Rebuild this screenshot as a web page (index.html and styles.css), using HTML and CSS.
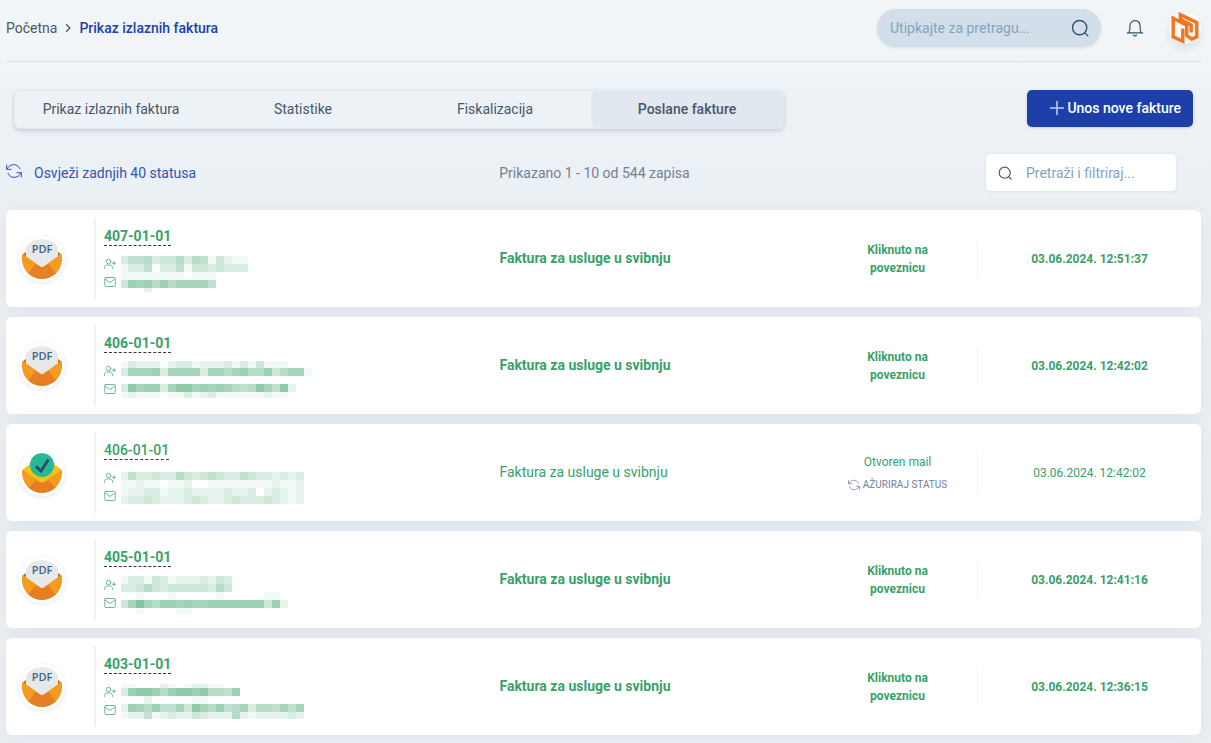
FILE: index.html
```html
<!DOCTYPE html>
<html lang="hr">
<head>
<meta charset="utf-8">
<meta name="viewport" content="width=device-width, initial-scale=1">
<title>Prikaz izlaznih faktura</title>
<link rel="stylesheet" href="styles.css">
</head>
<body>
<svg class="sprite" aria-hidden="true">
  <symbol id="i-search" viewBox="0 0 24 24"><circle cx="11.5" cy="11.5" r="9.5"/><path d="M18.5 18.5L22.500 22.500"/></symbol>
  <symbol id="i-refresh" viewBox="0 0 24 24"><path d="M1 3v6.500h6.500M1.500 9C4 4 8 2.500 12 2.500c4 0 7.500 2.300 9 6M23 21v-6.500h-6.500M22.500 15c-2.500 5-6.500 6.500-10.500 6.500-4 0-7.500-2.300-9-6"/></symbol>
  <symbol id="i-user" viewBox="0 0 24 24"><circle cx="9" cy="7" r="4.500"/><path d="M1 21v-2c0-3 2.500-5 5-5h6c2.500 0 5 2 5 5v2M20 7v7M16.500 10.500h7"/></symbol>
  <symbol id="i-mail" viewBox="0 0 24 24"><rect x="1.500" y="3" width="21" height="18" rx="2"/><path d="M2 6l10 7 10-7"/></symbol>
  <symbol id="i-pdf" viewBox="0 0 40 40">
    <g clip-path="url(#disc)">
      <path fill="#c27b12" d="M0 16l5-4h30l5 4v6H0z"/>
      <path fill="#e7e8ea" d="M4 0h32v19L20 28.500 4 19z"/>
      <path fill="#f39c1f" d="M0 14.500L14 26 4 40H0zM40 14.500L26 26l10 14h4z"/>
      <path fill="#f39c1f" d="M0 14.500L18.500 27.500q1.500.8 3 0L40 14.500V40H0z"/>
      <path fill="#e67e25" d="M3 40v-1L13.500 25l5 3q1.500.8 3 0l5-3L37 39v1z"/>
    </g>
  </symbol>
  <symbol id="i-opened" viewBox="0 0 40 40">
    <g clip-path="url(#disc)">
      <path fill="#f1c41b" d="M0 17L20 2l20 15v6L20 32 0 23z"/>
      <path fill="#f39c1f" d="M0 16.500L20 30l20-13.500V40H0z"/>
      <path fill="#e67e25" d="M3 40v-1L13.500 27.500 20 30l6.500-2.500L37 39v1z"/>
    </g>
    <circle cx="20" cy="12" r="12" fill="#26b999"/>
    <path d="M14 13.500l5 4.500 7.500-11.500" fill="none" stroke="#34495e" stroke-width="3"/>
  </symbol>
  <clipPath id="disc"><circle cx="20" cy="20" r="20"/></clipPath>
</svg>

<div class="page">
  <header class="top">
    <nav class="crumbs" aria-label="Putanja">
      <a href="#">Početna</a>
      <svg class="chevron" viewBox="0 0 8 8"><path d="M2.500 1l3 3-3 3"/></svg>
      <a href="#" class="current">Prikaz izlaznih faktura</a>
    </nav>
    <div class="tools">
      <label class="global-search">
        <input type="text" placeholder="Utipkajte za pretragu..." aria-label="Pretraga">
        <svg class="line"><use href="#i-search"/></svg>
      </label>
      <button class="bell" aria-label="Obavijesti">
        <svg class="line" viewBox="0 0 20 20"><path d="M1.500 15.500h17M3.500 15.500V14c1-1.200.8-3.500.8-6C4.300 4 6.800 1.800 10 1.800S15.700 4 15.700 8c0 2.500-.2 4.800.8 6v1.500M8.300 18c.8 1 2.600 1 3.400 0"/></svg>
      </button>
      <a href="#" class="brand" aria-label="Profil">
        <svg viewBox="0 0 28 32"><path d="M11.800 16.500V29.300L2.200 24.800V6.200L15.700 13.200V23.500L20.800 27.200 25.800 24.600V10.600L9.300 2.600V7.200L20.200 13.200V20.500"/></svg>
      </a>
    </div>
  </header>

  <div class="actions">
    <nav class="tabs" aria-label="Kartice">
      <a href="#">Prikaz izlaznih faktura</a>
      <a href="#">Statistike</a>
      <a href="#">Fiskalizacija</a>
      <a href="#" class="active">Poslane fakture</a>
    </nav>
    <button class="primary"><svg viewBox="0 0 14 14"><path d="M7 0v14M0 7h14"/></svg>Unos nove fakture</button>
  </div>

  <div class="filters">
    <a href="#" class="refresh"><svg class="line"><use href="#i-refresh"/></svg>Osvježi zadnjih 40 statusa</a>
    <p class="count">Prikazano 1 - 10 od 544 zapisa</p>
    <label class="filter-search">
      <svg class="line"><use href="#i-search"/></svg>
      <input type="text" placeholder="Pretraži i filtriraj..." aria-label="Pretraži i filtriraj">
    </label>
  </div>

  <main class="list">
    <article class="card bold">
      <div class="state"><svg viewBox="0 0 40 40"><use href="#i-pdf"/><text x="20" y="14" class="pdf-label">PDF</text></svg></div>
      <div class="info"><a href="#">407-01-01</a><div class="contact"><div class="glyphs"><svg class="line"><use href="#i-user"/></svg><svg class="line"><use href="#i-mail"/></svg></div><svg class="masked"></svg></div></div>
      <div class="subject">Faktura za usluge u svibnju</div>
      <div class="status"><span>Kliknuto na poveznicu</span></div>
      <time class="date">03.06.2024. 12:51:37</time>
    </article>
    <article class="card bold">
      <div class="state"><svg viewBox="0 0 40 40"><use href="#i-pdf"/><text x="20" y="14" class="pdf-label">PDF</text></svg></div>
      <div class="info"><a href="#">406-01-01</a><div class="contact"><div class="glyphs"><svg class="line"><use href="#i-user"/></svg><svg class="line"><use href="#i-mail"/></svg></div><svg class="masked"></svg></div></div>
      <div class="subject">Faktura za usluge u svibnju</div>
      <div class="status"><span>Kliknuto na poveznicu</span></div>
      <time class="date">03.06.2024. 12:42:02</time>
    </article>
    <article class="card">
      <div class="state"><svg viewBox="0 0 40 40"><use href="#i-opened"/></svg></div>
      <div class="info"><a href="#">406-01-01</a><div class="contact"><div class="glyphs"><svg class="line"><use href="#i-user"/></svg><svg class="line"><use href="#i-mail"/></svg></div><svg class="masked"></svg></div></div>
      <div class="subject">Faktura za usluge u svibnju</div>
      <div class="status"><span>Otvoren mail</span><button class="update"><svg class="line"><use href="#i-refresh"/></svg>AŽURIRAJ STATUS</button></div>
      <time class="date">03.06.2024. 12:42:02</time>
    </article>
    <article class="card bold">
      <div class="state"><svg viewBox="0 0 40 40"><use href="#i-pdf"/><text x="20" y="14" class="pdf-label">PDF</text></svg></div>
      <div class="info"><a href="#">405-01-01</a><div class="contact"><div class="glyphs"><svg class="line"><use href="#i-user"/></svg><svg class="line"><use href="#i-mail"/></svg></div><svg class="masked"></svg></div></div>
      <div class="subject">Faktura za usluge u svibnju</div>
      <div class="status"><span>Kliknuto na poveznicu</span></div>
      <time class="date">03.06.2024. 12:41:16</time>
    </article>
    <article class="card bold">
      <div class="state"><svg viewBox="0 0 40 40"><use href="#i-pdf"/><text x="20" y="14" class="pdf-label">PDF</text></svg></div>
      <div class="info"><a href="#">403-01-01</a><div class="contact"><div class="glyphs"><svg class="line"><use href="#i-user"/></svg><svg class="line"><use href="#i-mail"/></svg></div><svg class="masked"></svg></div></div>
      <div class="subject">Faktura za usluge u svibnju</div>
      <div class="status"><span>Kliknuto na poveznicu</span></div>
      <time class="date">03.06.2024. 12:36:15</time>
    </article>
  </main>
</div>
<script src="script.js"></script>
</body>
</html>
```

FILE: styles.css
```css
* { box-sizing: border-box; }
body {
  margin: 0;
  font: 14px/20px Roboto, "Noto Sans", sans-serif;
  color: #4a5568;
  background: linear-gradient(#f1f5f8 0, #f1f5f8 60px, #edf2f6 90px, #ebf0f4 200px, #ebf0f4 100%);
}
a { color: inherit; text-decoration: none; }
button, input { font: inherit; color: inherit; border: 0; background: none; padding: 0; margin: 0; outline: 0; }
button { cursor: pointer; }
input { min-width: 0; flex: 1; }
input::placeholder { color: #85a3bf; opacity: 1; }
p { margin: 0; }
svg { flex: none; }
.sprite { position: absolute; width: 0; height: 0; }
.line { fill: none; stroke: currentColor; stroke-width: 1.5; stroke-linecap: round; stroke-linejoin: round; }
.page { padding: 0 10px 8px 6px; }

.top { display: flex; justify-content: space-between; align-items: center; height: 62px; padding-bottom: 5px; border-bottom: 1px solid #dfe4ea; }
.crumbs { display: flex; align-items: center; gap: 6px; }
.crumbs .current { color: #1c3faa; font-weight: 500; }
.chevron { width: 10px; height: 10px; fill: none; stroke: #4a5568; stroke-width: 1; }
.tools { display: flex; align-items: center; }
.global-search { display: flex; align-items: center; width: 224px; height: 38px; padding: 0 12px 0 13px; border-radius: 19px; background: #d2dfea; box-shadow: 0 1px 3px rgba(0, 30, 60, .1); }
.global-search svg { width: 18px; height: 18px; stroke-width: 1.8; color: #2f556f; }
.bell { display: flex; margin: 0 25px; color: #2f556f; }
.bell svg { width: 18px; height: 20px; stroke-width: 1.3; }
.brand { display: flex; justify-content: center; width: 32px; height: 32px; border-radius: 50%; background: #f8fafb; box-shadow: 0 5px 8px rgba(0, 20, 40, .08); }
.brand svg { width: 28px; height: 32px; fill: none; stroke: #f47521; stroke-width: 3.4; }

.actions { display: flex; justify-content: space-between; align-items: flex-start; padding: 28px 8px 0; }
.tabs { display: grid; grid-template-columns: repeat(4, 1fr); width: 770px; border: 1px solid #e2e8f0; border-radius: 6px; background: #edf2f7; box-shadow: 0 2px 4px rgba(0, 20, 50, .16); }
.tabs a { padding: 8px 0 9px; text-align: center; border-radius: 6px; }
.tabs .active { background: #e2e8f0; font-weight: 500; }
.primary { display: flex; align-items: center; justify-content: flex-end; gap: 3px; width: 166px; height: 37px; padding: 0 12px 2px 0; border-radius: 5px; background: #1c3faa; color: #fff; font-weight: 500; box-shadow: 0 1px 3px rgba(0, 0, 0, .15); }
.primary svg { width: 14px; height: 14px; stroke: #c5cfea; stroke-width: 1.5; }

.filters { display: grid; grid-template-columns: 1fr 1fr 1fr; align-items: center; padding: 24px 24px 18px 0; }
.refresh { display: flex; gap: 12px; color: #3353b5; }
.refresh svg { width: 16px; height: 16px; }
.count { padding-left: 6px; text-align: center; color: #718096; }
.filter-search { display: flex; align-items: center; justify-self: end; gap: 14px; width: 192px; height: 39px; padding: 0 12px; border: 1px solid #e2e8f0; border-radius: 5px; background: #fff; box-shadow: 0 1px 2px rgba(0, 0, 0, .04); }
.filter-search svg { width: 14px; height: 14px; stroke-width: 2; }

.list { display: flex; flex-direction: column; gap: 10px; }
.card { display: grid; grid-template-columns: 88px 14fr 11fr 160px 223px; align-items: center; min-height: 97px; border-radius: 6px; background: #fff; color: #38a169; box-shadow: 0 3px 20px rgba(40, 70, 100, .07); }
.state { display: flex; align-items: center; align-self: stretch; margin: 8px 0; padding: 1px 0 0 16px; }
.state svg { width: 40px; height: 40px; border-radius: 50%; box-shadow: 0 0 0 3px #fff, 0 1px 4px 3px rgba(0, 0, 0, .1); }
.pdf-label { font: 600 11px "Open Sans", sans-serif; text-anchor: middle; fill: #3e6289; }
.info { align-self: stretch; margin: 8px 0; padding: 8px 0 0 8px; border-left: 2px solid #edf2f7; }
.info > a { display: inline-block; height: 20px; font-weight: 500; border-bottom: 1px dashed #2d3748; }
.contact { display: flex; gap: 5px; margin-top: 5px; }
.glyphs { display: flex; flex-direction: column; gap: 6px; padding-top: 7px; }
.glyphs svg { width: 12px; height: 12px; opacity: .8; stroke-width: 1.8; }
.masked { width: 200px; height: 42px; shape-rendering: crispEdges; fill: #38a169; }
.status { display: flex; flex-direction: column; align-items: center; justify-content: center; gap: 8px; min-height: 32px; border-right: 1px solid #edf2f7; font-size: 12px; line-height: 18px; text-align: center; }
.status span { max-width: 80px; }
.update { display: flex; align-items: center; gap: 3px; padding-bottom: 2px; color: #718096; font-size: 10px; line-height: 12px; }
.update svg { width: 12px; height: 12px; }
.date { font-size: 12px; text-align: center; }
.subject { padding-bottom: 2px; }
.bold .info > a, .bold .subject, .bold .status, .bold .date { font-weight: 700; }
```

FILE: script.js
```js
// Each strip: [top, height, intensity of each 8px cell as a hex digit].
const masks = [
  [[5, 8, "3556344636514211"], [13, 8, "1335033514434333"], [21, 8, "111111110111"], [29, 8, "487868677775"], [37, 4, "0002"]],
  [[3, 7, "132220233122231314111"], [10, 8, "377783777737767866846771"], [26, 8, "3978837997878765697592"], [34, 6, "1211101131231111112110"]],
  [[7, 8, "25334336434543354332323"], [15, 8, "11211011200111111112112"], [23, 8, "12233122322223223023212"], [31, 8, "23343222343223433343212"]],
  [[4, 8, "13314312223243"], [12, 8, "33464344444364"], [20, 8, "00100010000010000011"], [28, 8, "47a768878778888888482"], [36, 7, "001000011"]],
  [[5, 4, "1100021012211"], [9, 8, "389986899896658"], [17, 8, "0002000001100"], [25, 8, "28768557497685673665757"], [33, 7, "12251232243222621222232"]]
];

// The first cell is one pixel narrower than the rest.
document.querySelectorAll(".masked").forEach((svg, i) => {
  for (const [y, height, cells] of masks[i]) {
    [...cells].forEach((digit, column) => {
      const opacity = parseInt(digit, 16) / 16;
      if (!opacity) return;
      const rect = document.createElementNS("http://www.w3.org/2000/svg", "rect");
      const attributes = { x: column ? column * 8 - 1 : 0, y, width: column ? 8 : 7, height, opacity };
      for (const name in attributes) rect.setAttribute(name, attributes[name]);
      svg.append(rect);
    });
  }
});
```
